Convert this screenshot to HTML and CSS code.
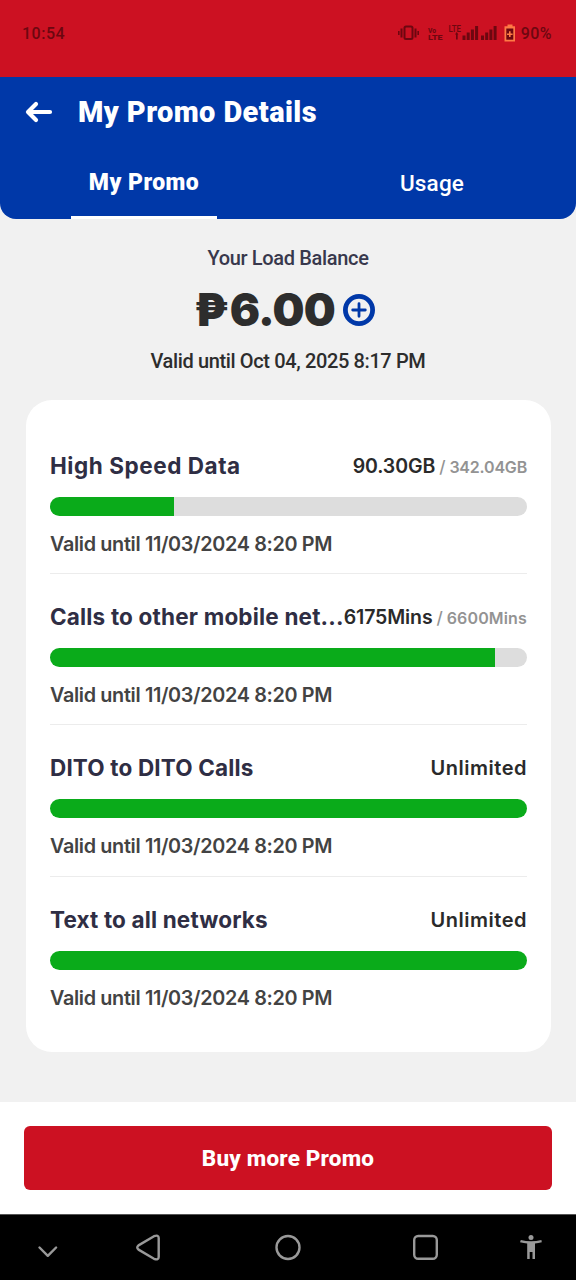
FILE: index.html
```html
<!DOCTYPE html>
<html lang="en">
<head>
<meta charset="utf-8">
<title>My Promo Details</title>
<link rel="stylesheet" href="styles.css">
</head>
<body>
<div class="screen">
  <div class="status">
    <span class="clock">10:54</span>
    <div class="status-icons">
      <svg class="indicators" width="122" height="22" viewBox="0 0 122 22" fill="currentColor">
        <rect x="7.500" y="4.500" width="8" height="12.500" rx="1.500" fill="none" stroke="currentColor" stroke-width="2"/>
        <path d="M3.500 6.500h2v9h-2zM1 9h1.600v4H1zM17.500 6.500h2v9h-2zM20.400 9h1.600v4h-1.600z"/>
        <text x="31" y="10.500" font-size="8" textLength="8" lengthAdjust="spacingAndGlyphs">Vo</text>
        <text x="31" y="17.500" font-size="8" textLength="14.500" lengthAdjust="spacingAndGlyphs">LTE</text>
        <text class="lte" x="51.500" y="9.500" font-size="8.500" textLength="12.500" lengthAdjust="spacingAndGlyphs">LTE</text>
        <path d="M58 12.500l1.700-2.500 1.700 2.500h-.7v5h-1.700v-5z"/>
        <path d="M65.500 13.500h3V18h-3zM69.700 10.500h3V18h-3zM73.900 7.500h3V18h-3zM78.100 4h3v14h-3z"/>
        <path d="M84 13.500h3V18h-3zM88.200 10.500h3V18h-3zM92.400 7.500h3V18h-3zM96.600 4h3v14h-3z"/>
        <path class="battery" d="M110.500 2.500h5V4.200h2.500V19.500h-10.500V4.200h3z"/>
        <path d="M109.300 6.500h7v11.200h-7z"/>
        <path class="battery" d="M112 9.300h1.600v2.100h2v1.600h-2v2.100H112V13h-2v-1.600h2z"/>
      </svg>
      <span class="percent">90%</span>
    </div>
  </div>

  <header class="header">
    <div class="title-row">
      <svg class="back" width="28" height="24" viewBox="0 0 28 24" fill="none" stroke="#fff" stroke-width="4.200" stroke-linecap="round" stroke-linejoin="round">
        <path d="M11 4L3 12l8 8M3.500 12H25"/>
      </svg>
      <h1 class="title">My Promo Details</h1>
    </div>
    <nav class="tabs">
      <div class="tab"><span class="tab-label active">My Promo</span></div>
      <div class="tab"><span class="tab-label">Usage</span></div>
    </nav>
  </header>

  <main class="content">
    <section class="balance">
      <div class="balance-label">Your Load Balance</div>
      <div class="balance-row">
        <span class="amount"><span class="peso">₱</span>6.00</span>
        <svg width="32" height="32" viewBox="0 0 32 32" fill="none" stroke="#0038a8">
          <circle cx="16" cy="16" r="13.600" stroke-width="4.800"/>
          <path d="M16 9.700v12.600M9.700 16h12.600" stroke-width="2.800" stroke-linecap="round"/>
        </svg>
      </div>
      <div class="balance-valid">Valid until Oct 04, 2025 8:17 PM</div>
    </section>

    <section class="card">
      <div class="item">
        <div class="head"><span class="name data">High Speed Data</span><span class="value">90.30GB<span class="slash">/</span><span class="total">342.04GB</span></span></div>
        <div class="bar"><div class="fill" style="width:26%"></div></div>
        <div class="valid">Valid until 11/03/2024 8:20 PM</div>
      </div>
      <div class="item">
        <div class="head"><span class="name long">Calls to other mobile net...</span><span class="value mins">6175Mins<span class="slash">/</span><span class="total">6600Mins</span></span></div>
        <div class="bar"><div class="fill" style="width:93.200%"></div></div>
        <div class="valid">Valid until 11/03/2024 8:20 PM</div>
      </div>
      <div class="item">
        <div class="head"><span class="name">DITO to DITO Calls</span><span class="value unlimited">Unlimited</span></div>
        <div class="bar"><div class="fill" style="width:100%"></div></div>
        <div class="valid">Valid until 11/03/2024 8:20 PM</div>
      </div>
      <div class="item">
        <div class="head"><span class="name">Text to all networks</span><span class="value unlimited">Unlimited</span></div>
        <div class="bar"><div class="fill" style="width:100%"></div></div>
        <div class="valid">Valid until 11/03/2024 8:20 PM</div>
      </div>
    </section>
  </main>

  <footer class="footer"><button class="buy">Buy more Promo</button></footer>

  <div class="navbar">
    <svg width="576" height="65" viewBox="0 0 576 65" fill="none" stroke="#999" stroke-width="2.400" stroke-linecap="round" stroke-linejoin="round">
      <path d="M39.500 32.500l8.300 8.300 8.300-8.300"/>
      <path d="M138.500 30.400L154 21.200Q158.700 19.500 158.700 23V42Q158.700 45.500 154 43.800L138.500 34.600Q136 32.500 138.500 30.400Z"/>
      <circle cx="288" cy="32.500" r="11.500"/>
      <rect x="414.200" y="21" width="22.600" height="22.800" rx="4"/>
      <g fill="#999" stroke="none">
        <circle cx="531" cy="22.500" r="2.500"/>
        <path d="M520.800 25Q531 27.500 541.400 25l.4 2.200q-3.500.9-6.800 1.200V44h-2.500v-7h-2.800v7h-2.500V28.400q-3.300-.3-7.200-1.200z"/>
      </g>
    </svg>
  </div>
</div>
</body>
</html>
```

FILE: styles.css
```css
* { box-sizing: border-box; }

body {
  margin: 0;
  background: #f1f1f1;
  font-family: Roboto, "Noto Sans", sans-serif;
}

.screen {
  width: 576px;
  height: 1280px;
  display: flex;
  flex-direction: column;
  overflow: hidden;
}

.status {
  height: 77px;
  flex: none;
  padding: 22px 24px 0 22px;
  display: flex;
  justify-content: space-between;
  align-items: flex-start;
  background: #cc1122;
  color: #6d0710;
  font-size: 16px;
  font-weight: 500;
  line-height: 24px;
}

.clock { letter-spacing: 0.500px; }
.percent { letter-spacing: 0.400px; }
.status-icons { display: flex; gap: 2px; }
.indicators { font-weight: 800; }
.lte { font-weight: 500; }
.battery { fill: #ff7a45; }

.header {
  height: 142px;
  flex: none;
  display: flex;
  flex-direction: column;
  background: #0038a8;
  color: #fff;
  border-radius: 0 0 16px 16px;
}

.title-row {
  height: 70px;
  padding-left: 25px;
  display: flex;
  align-items: center;
  gap: 25px;
}

.title {
  margin: 0;
  font-size: 29px;
  font-weight: 900;
  letter-spacing: 0.400px;
}

.tabs {
  flex: 1;
  display: grid;
  grid-template-columns: 1fr 1fr;
}

.tab {
  display: flex;
  justify-content: center;
}

.tab-label {
  padding: 22px 18px 1px;
  font-size: 22.500px;
  line-height: 28px;
  font-weight: 500;
  letter-spacing: 0.150px;
}

.tab-label.active {
  font-size: 23px;
  font-weight: 900;
  letter-spacing: 0.450px;
  border-bottom: 3px solid #fff;
}

.content {
  height: 883px;
  flex: none;
  background: #f1f1f1;
}

.balance {
  height: 181px;
  padding-top: 27px;
  display: flex;
  flex-direction: column;
  align-items: center;
  font-size: 20px;
  line-height: 24px;
  font-weight: 500;
  color: #2d2d2d;
}

.balance-label {
  color: #38384c;
  letter-spacing: -0.340px;
}

.balance-row {
  height: 79px;
  margin-left: -7px;
  display: flex;
  align-items: center;
  gap: 8px;
}

.amount {
  font-family: Inter, sans-serif;
  font-size: 45px;
  line-height: 54px;
  font-weight: 900;
  letter-spacing: -0.900px;
}

.peso { letter-spacing: 1.500px; }

.balance-valid { letter-spacing: -0.370px; }

.card {
  height: 652px;
  margin: 0 25px 0 26px;
  padding: 23px 24px 0;
  border-radius: 26px;
  background: #fff;
  font-family: Inter, sans-serif;
  font-weight: 600;
}

.item {
  height: 151.200px;
  padding-top: 29px;
  border-bottom: 1px solid #ececec;
}

.item:last-child { border-bottom: 0; }

.head {
  height: 28px;
  display: flex;
  justify-content: space-between;
  white-space: nowrap;
  line-height: 28px;
}

.name {
  font-size: 22.500px;
  font-weight: 650;
  letter-spacing: 0.150px;
  color: #2f2e44;
}

.name.data { letter-spacing: 0.550px; }
.name.long { letter-spacing: 0.180px; }

.value {
  font-size: 19.500px;
  letter-spacing: -0.100px;
  color: #2a2a2a;
}

.value.mins { letter-spacing: -0.120px; }

.value.unlimited {
  font-size: 20px;
  letter-spacing: 0.520px;
}

.slash {
  margin: 0 4px;
  font-size: 17px;
  font-weight: 500;
  color: #939393;
}

.total {
  font-size: 16px;
  letter-spacing: -0.200px;
  color: #939393;
}

.mins .total { letter-spacing: 0.150px; }

.bar {
  height: 19px;
  margin-top: 17px;
  border-radius: 9.500px;
  background: #dddddd;
  overflow: hidden;
}

.fill {
  height: 100%;
  background: #0aab1a;
}

.valid {
  margin-top: 14px;
  font-size: 19.800px;
  line-height: 28px;
  letter-spacing: -0.330px;
  color: #434343;
}

.footer {
  height: 112px;
  flex: none;
  padding: 24px;
  background: #fff;
}

.buy {
  width: 100%;
  height: 64px;
  padding: 0;
  border: 0;
  border-radius: 6px;
  background: #cc1122;
  color: #fff;
  font: 800 22.500px Roboto, sans-serif;
  letter-spacing: 0.200px;
}

.navbar {
  height: 66px;
  flex: none;
  border-top: 1px solid #555;
  background: #000;
}
```
